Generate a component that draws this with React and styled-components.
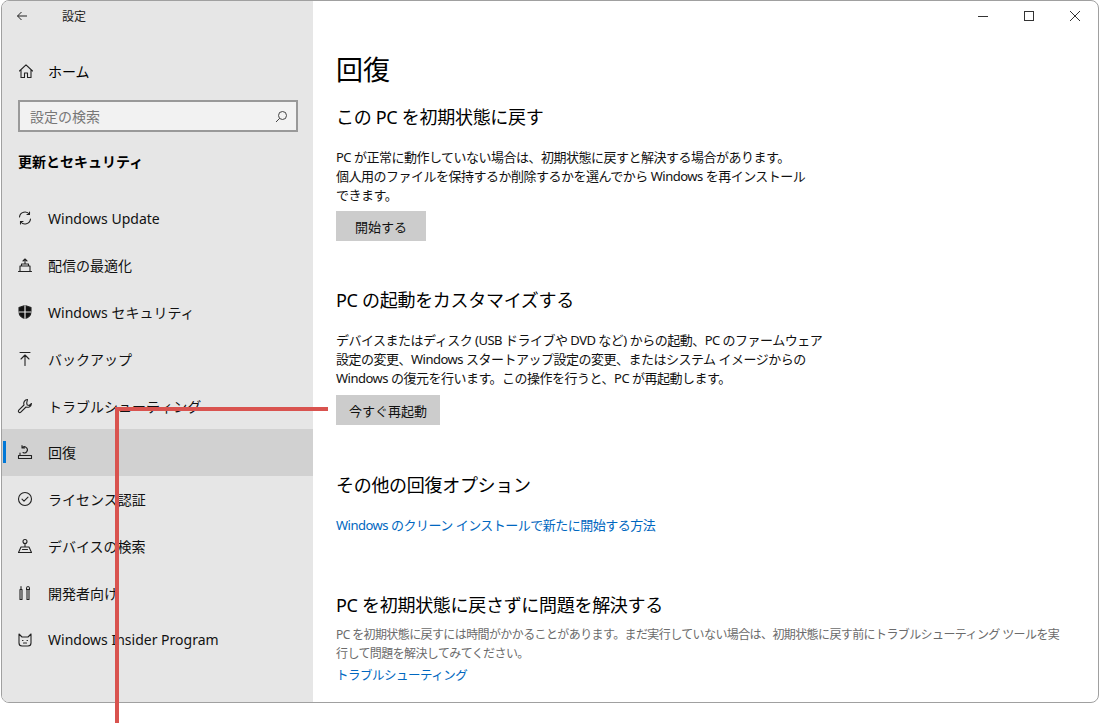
import React from "react";
import styled, { createGlobalStyle } from "styled-components";

const Global = createGlobalStyle`
  html, body { margin: 0; padding: 0; background: #fff; }
  body { font-family: "Noto Sans", "Noto Sans CJK JP", sans-serif; color: #000; }
`;

const Stage = styled.div`
  position: relative;
  width: 1100px;
  height: 725px;
  background: #fff;
`;

const Win = styled.div`
  margin-left: 1px;
  width: 1096px;
  height: 701px;
  border: 1px solid #a0a0a0;
  border-radius: 8px;
  overflow: hidden;
  display: flex;
  background: #fff;
`;

const Side = styled.div`
  width: 311px;
  background: #e6e6e6;
  display: flex;
  flex-direction: column;
`;

const TitleRow = styled.div`
  height: 30px;
  display: flex;
  align-items: center;
  padding-left: 14px;
  font-size: 12px;
  color: #222;
  gap: 34px;
`;

const HomeRow = styled.div`
  margin-top: 25px;
  height: 30px;
  display: flex;
  align-items: center;
  padding-left: 16px;
  gap: 14px;
  font-size: 14px;
`;

const Search = styled.div`
  margin: 14px 15px 0 16px;
  height: 28px;
  border: 2px solid #999;
  background: #f2f2f2;
  display: flex;
  align-items: center;
  justify-content: space-between;
  padding: 0 8px 0 10px;
  font-size: 14px;
  color: #777;
`;

const Section = styled.div`
  margin-top: 20px;
  padding-left: 16px;
  font-size: 14px;
  font-weight: 700;
  height: 20px;
  line-height: 20px;
`;

const Nav = styled.div`
  margin-top: 23px;
  display: flex;
  flex-direction: column;
`;

const NavItem = styled.div`
  position: relative;
  height: 46.8px;
  display: flex;
  align-items: center;
  padding-left: 15px;
  gap: 15px;
  font-size: 14px;
  color: #111;
  background: ${(p) => (p.$active ? "#d1d1d1" : "transparent")};
  &::before {
    content: "";
    display: ${(p) => (p.$active ? "block" : "none")};
    position: absolute;
    left: 1px;
    top: 12px;
    width: 3px;
    height: 22px;
    background: #0078d7;
  }
`;

const IconBox = styled.span`
  width: 16px;
  height: 16px;
  display: inline-flex;
  color: #222;
`;

const Main = styled.div`
  flex: 1;
  display: flex;
  flex-direction: column;
  padding-left: 23px;
  position: relative;
`;

const Controls = styled.div`
  position: absolute;
  top: 0;
  right: 0;
  display: flex;
`;

const Ctl = styled.div`
  width: 46px;
  height: 30px;
  display: flex;
  align-items: center;
  justify-content: center;
`;

const PageTitle = styled.h1`
  margin: 50px 0 0;
  font-size: 27px;
  font-weight: 400;
  line-height: 38px;
`;

const H2 = styled.h2`
  margin: ${(p) => p.$mt}px 0 0;
  font-size: 18px;
  font-weight: 400;
  line-height: 28px;
  letter-spacing: -0.3px;
  white-space: nowrap;
`;

const P = styled.p`
  margin: ${(p) => p.$mt}px 0 0;
  font-size: ${(p) => (p.$muted ? 12 : 13)}px;
  line-height: 19px;
  letter-spacing: ${(p) => (p.$muted ? -0.6 : -0.5)}px;
  color: ${(p) => (p.$muted ? "#6b6b6b" : "#111")};
  white-space: nowrap;
`;

const Btn = styled.div`
  margin-top: ${(p) => p.$mt}px;
  align-self: flex-start;
  height: 30px;
  padding: 0 ${(p) => p.$px}px;
  background: #cccccc;
  display: flex;
  align-items: center;
  font-size: 13px;
  color: #111;
`;

const Link = styled.div`
  margin-top: ${(p) => p.$mt}px;
  font-size: ${(p) => p.$fs || 13}px;
  line-height: 19px;
  letter-spacing: -0.5px;
  color: #0067c0;
`;

const RedV = styled.div`
  position: absolute;
  left: 115px;
  top: 407px;
  width: 4px;
  height: 316px;
  background: #d9534f;
`;
const RedH = styled.div`
  position: absolute;
  left: 115px;
  top: 407px;
  width: 213px;
  height: 4px;
  background: #d9534f;
`;

const S = ({ children }) => (
  <IconBox>
    <svg width="16" height="16" viewBox="0 0 16 16" fill="none" stroke="#222" strokeWidth="1.1" strokeLinecap="round" strokeLinejoin="round">
      {children}
    </svg>
  </IconBox>
);

const items = [
  ["Windows Update", <S><path d="M2.5 7a5.5 5.5 0 0 1 10-2.5M13.5 9a5.5 5.5 0 0 1-10 2.5M12.5 2v2.5H10M3.5 14v-2.5H6" /></S>],
  ["配信の最適化", <S><path d="M1.5 14.5h13M3 14.5V9h10v5.5M4.5 9V7h7v2M8 2v5M6 4l2-2 2 2" /></S>],
  ["Windows セキュリティ", <S><path d="M8 1.5l6 2v4.5c0 3.5-3 6-6 6.5-3-0.5-6-3-6-6.5V3.5z" fill="#111" /><path d="M8 1.5v13M2 8h12" stroke="#e6e6e6" strokeWidth="1.2" /></S>],
  ["バックアップ", <S><path d="M3 1.5h10M8 4v10.5M4 8l4-4 4 4" /></S>],
  ["トラブルシューティング", <S><path d="M10.5 1.5a4 4 0 0 0-3.5 5.5L1.8 12.2a1.4 1.4 0 0 0 2 2L9 9a4 4 0 0 0 5.5-3.5l-2.3 2-2-.5-.5-2z" /></S>],
  ["回復", <S><path d="M1.5 14.5h13v-3h-13zM3 11.5V9M5 4a3 3 0 1 1 1 4.5M5 1.5V4h2.5" /></S>, true],
  ["ライセンス認証", <S><circle cx="8" cy="8" r="6.5" /><path d="M5 8.2l2 2 4-4" /></S>],
  ["デバイスの検索", <S><circle cx="8" cy="3.5" r="2" /><path d="M8 5.5V9M1.5 14.5L4 9h8l2.5 5.5zM5.5 11.5h5" /></S>],
  ["開発者向け", <S><path d="M4 1.5v3M3 4.5h2v10H3zM11 1.5c-1 0-1.5 1-1.5 2v1h3v-1c0-1-.5-2-1.5-2zM10 4.5h2v10h-2z" /></S>],
  ["Windows Insider Program", <S><path d="M2 2l3 3h6l3-3v9a3 3 0 0 1-3 3H5a3 3 0 0 1-3-3zM5.5 8.5h.5M10 8.5h.5M6.5 11h3" /></S>],
];

export default function App() {
  return (
    <Stage>
      <Global />
      <Win>
        <Side>
          <TitleRow>
            <svg width="12" height="12" viewBox="0 0 12 12" fill="none" stroke="#222" strokeWidth="1"><path d="M11 6H1.5M5.5 2L1.5 6l4 4" /></svg>
            <span>設定</span>
          </TitleRow>
          <HomeRow>
            <S><path d="M1.5 8L8 1.8 14.5 8M3 6.5v8h3.5V10h3v4.5H13v-8" /></S>
            <span>ホーム</span>
          </HomeRow>
          <Search>
            <span>設定の検索</span>
            <svg width="13" height="13" viewBox="0 0 13 13" fill="none" stroke="#444" strokeWidth="1"><circle cx="7.5" cy="5.5" r="4" /><path d="M4.7 8.3L1 12" /></svg>
          </Search>
          <Section>更新とセキュリティ</Section>
          <Nav>
            {items.map(([label, icon, active]) => (
              <NavItem key={label} $active={active}>
                {icon}
                <span>{label}</span>
              </NavItem>
            ))}
          </Nav>
        </Side>
        <Main>
          <Controls>
            <Ctl><svg width="10" height="10"><path d="M0 5.5h10" stroke="#333" /></svg></Ctl>
            <Ctl><svg width="10" height="10"><rect x="0.5" y="0.5" width="9" height="9" fill="none" stroke="#333" /></svg></Ctl>
            <Ctl><svg width="10" height="10"><path d="M0 0l10 10M10 0L0 10" stroke="#333" /></svg></Ctl>
          </Controls>
          <PageTitle>回復</PageTitle>
          <H2 $mt={14}>この PC を初期状態に戻す</H2>
          <P $mt={17}>
            PC が正常に動作していない場合は、初期状態に戻すと解決する場合があります。<br />
            個人用のファイルを保持するか削除するかを選んでから Windows を再インストール<br />
            できます。
          </P>
          <Btn $mt={6} $px={19}>開始する</Btn>
          <H2 $mt={45}>PC の起動をカスタマイズする</H2>
          <P $mt={17}>
            デバイスまたはディスク (USB ドライブや DVD など) からの起動、PC のファームウェア<br />
            設定の変更、Windows スタートアップ設定の変更、またはシステム イメージからの<br />
            Windows の復元を行います。この操作を行うと、PC が再起動します。
          </P>
          <Btn $mt={7} $px={13}>今すぐ再起動</Btn>
          <H2 $mt={46}>その他の回復オプション</H2>
          <Link $mt={17}>Windows のクリーン インストールで新たに開始する方法</Link>
          <H2 $mt={56}>PC を初期状態に戻さずに問題を解決する</H2>
          <P $muted $mt={6}>
            PC を初期状態に戻すには時間がかかることがあります。まだ実行していない場合は、初期状態に戻す前にトラブルシューティング ツールを実<br />
            行して問題を解決してみてください。
          </P>
          <Link $mt={3} $fs={12.5}>トラブルシューティング</Link>
        </Main>
      </Win>
      <RedH />
      <RedV />
    </Stage>
  );
}
